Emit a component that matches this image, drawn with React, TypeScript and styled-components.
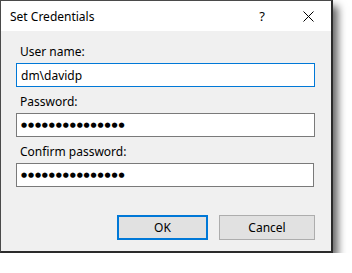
import React from "react";
import styled, { createGlobalStyle } from "styled-components";

const Global = createGlobalStyle`
  html, body { margin: 0; padding: 0; background: #ffffff; }
  body { font-family: "Noto Sans", "Liberation Sans", sans-serif; }
`;

const Window = styled.div`
  box-sizing: border-box;
  width: 333px;
  height: 253px;
  border-left: 1px solid #4a4a4a;
  border-top: 1px solid #4a4a4a;
  border-right: 2px solid #2b2b2b;
  border-bottom: 2px solid #2b2b2b;
  background: #f0f0f0;
  box-shadow: 5px 6px 8px rgba(0, 0, 0, 0.6);
  display: flex;
  flex-direction: column;
`;

const TitleBar = styled.div`
  height: 30px;
  background: #ffffff;
  display: flex;
  align-items: center;
`;

const Title = styled.div`
  flex: 1;
  padding-left: 9px;
  font-size: 12px;
  color: #000;
`;

const TitleButton = styled.div`
  width: 46px;
  height: 30px;
  display: flex;
  align-items: center;
  justify-content: center;
  font-size: 13px;
  color: #000;
`;

const Body = styled.div`
  flex: 1;
  padding: 13px 16px 0 15px;
  display: flex;
  flex-direction: column;
`;

const Label = styled.div`
  font-size: 12px;
  line-height: 16px;
  padding-left: 4px;
  color: #000;
  margin-bottom: 3px;
`;

const Field = styled.div<{ $focused?: boolean; $width?: number }>`
  box-sizing: border-box;
  height: 24px;
  width: ${(p) => (p.$width ? `${p.$width}px` : "100%")};
  background: #ffffff;
  border: 1px solid ${(p) => (p.$focused ? "#0078d7" : "#7a7a7a")};
  display: flex;
  align-items: center;
  padding-left: 4px;
  font-size: 12px;
  color: #000;
  margin-bottom: 7px;
`;

const Dots = styled.span`
  font-family: "DejaVu Sans", sans-serif;
  font-size: 7px;
  letter-spacing: 0.85px;
  color: #000;
`;

const ButtonRow = styled.div`
  margin-top: 21px;
  display: flex;
  justify-content: flex-end;
  gap: 11px;
`;

const Button = styled.div<{ $default?: boolean; $width: number }>`
  box-sizing: border-box;
  width: ${(p) => p.$width}px;
  height: 25px;
  background: #e1e1e1;
  border: ${(p) => (p.$default ? "2px solid #0078d7" : "1px solid #adadad")};
  display: flex;
  align-items: center;
  justify-content: center;
  font-size: 12px;
  color: #000;
`;

const CloseIcon = () => (
  <svg width="11" height="11" viewBox="0 0 11 11">
    <path d="M0.5 0.5 L10.5 10.5 M10.5 0.5 L0.5 10.5" stroke="#000" strokeWidth="1" fill="none" />
  </svg>
);

const dots = "●●●●●●●●●●●●●●●";

export default function App() {
  return (
    <>
      <Global />
      <Window>
        <TitleBar>
          <Title>Set Credentials</Title>
          <TitleButton>?</TitleButton>
          <TitleButton>
            <CloseIcon />
          </TitleButton>
        </TitleBar>
        <Body>
          <Label>User name:</Label>
          <Field $focused>dm\davidp</Field>
          <Label>Password:</Label>
          <Field>
            <Dots>{dots}</Dots>
          </Field>
          <Label>Confirm password:</Label>
          <Field $width={298}>
            <Dots>{dots}</Dots>
          </Field>
          <ButtonRow>
            <Button $default $width={91}>OK</Button>
            <Button $width={96}>Cancel</Button>
          </ButtonRow>
        </Body>
      </Window>
    </>
  );
}
